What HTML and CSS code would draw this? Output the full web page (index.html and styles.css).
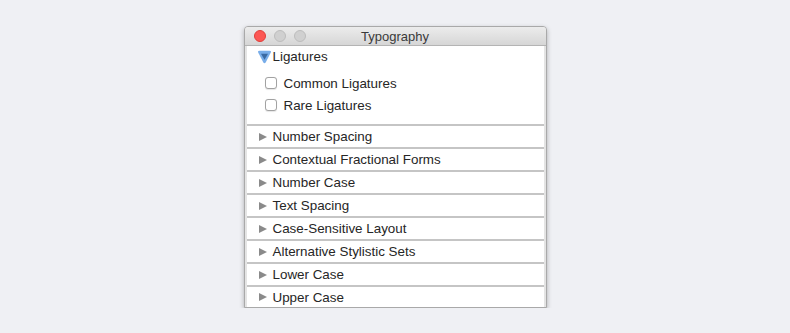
FILE: index.html
```html
<!DOCTYPE html>
<html lang="en">
<head>
  <meta charset="UTF-8" />
  <title>Typography</title>
  <link rel="stylesheet" href="styles.css">
</head>
<body>

  <div class="window">
    <div class="titlebar">
      <div class="lights">
        <span class="light close"></span>
        <span class="light"></span>
        <span class="light"></span>
      </div>
      <div class="title">Typography</div>
    </div>

    <div class="panel">
      <div class="group open">
        <div class="group-head">
          <svg class="disclosure" width="15" height="14" viewBox="0 0 15 14">
            <path d="M1.2 2.6 Q0.4 0.8 2.6 0.8 L12.4 0.8 Q14.6 0.8 13.8 2.6 L8.8 12.2 Q7.5 14.2 6.2 12.2 Z" fill="#78ade9"/>
            <path d="M4 3.8 L11 3.8 L7.5 9.8 Z" fill="#3a6aa3"/>
          </svg>
          <span>Ligatures</span>
        </div>
        <label class="check"><span class="box"></span>Common Ligatures</label>
        <label class="check"><span class="box"></span>Rare Ligatures</label>
      </div>

      <div class="row"><span class="tri"></span>Number Spacing</div>
      <div class="row"><span class="tri"></span>Contextual Fractional Forms</div>
      <div class="row"><span class="tri"></span>Number Case</div>
      <div class="row"><span class="tri"></span>Text Spacing</div>
      <div class="row"><span class="tri"></span>Case-Sensitive Layout</div>
      <div class="row"><span class="tri"></span>Alternative Stylistic Sets</div>
      <div class="row"><span class="tri"></span>Lower Case</div>
      <div class="row"><span class="tri"></span>Upper Case</div>
    </div>
  </div>

</body>
</html>
```

FILE: styles.css
```css
* {
  margin: 0;
  padding: 0;
  box-sizing: border-box;
}

body {
  background: #eff0f4;
  font-family: "Liberation Sans", Arial, sans-serif;
  font-size: 13.4px;
  color: #262626;
  display: flex;
  justify-content: center;
  padding-top: 26px;
}

.window {
  width: 303px;
  border: 1px solid #a9a9a9;
  border-radius: 4px 4px 0 0;
  background: #e4e4e4;
  box-shadow: 0 2px 5px rgba(0, 0, 0, 0.28);
  overflow: hidden;
}

.titlebar {
  position: relative;
  height: 19px;
  background: linear-gradient(#ececec, #d6d6d6);
  border-bottom: 1px solid #b4b4b4;
  display: flex;
  align-items: center;
  justify-content: center;
}

.lights {
  position: absolute;
  left: 9px;
  top: 3px;
  display: flex;
  gap: 8px;
}

.light {
  width: 12px;
  height: 12px;
  border-radius: 50%;
  background: #d0d0d0;
  border: 1px solid #bdbdbd;
}

.light.close {
  background: #fc5753;
  border-color: #df3e3a;
}

.title {
  color: #3a3a3a;
  font-size: 13px;
  padding-top: 1px;
}

.panel {
  margin: 0 2px;
  background: #fff;
}

.group {
  height: 78px;
  padding: 3px 0 0 10px;
}

.group-head {
  display: flex;
  align-items: center;
  gap: 1px;
  height: 15px;
}

.disclosure {
  display: block;
}

.check {
  display: flex;
  align-items: center;
  gap: 7px;
  margin-left: 8px;
  height: 22px;
}

.group-head + .check {
  margin-top: 8px;
}

.box {
  width: 12px;
  height: 12px;
  border: 1px solid #a2a2a2;
  border-radius: 3px;
  background: #fff;
  box-shadow: 0 0.5px 1px rgba(0, 0, 0, 0.1);
}

.row {
  height: 23px;
  border-top: 2px solid #c5c5c5;
  display: flex;
  align-items: center;
  padding-left: 12px;
  gap: 6px;
}

.row:last-child {
  height: 22px;
}

.tri {
  width: 0;
  height: 0;
  border-top: 4.5px solid transparent;
  border-bottom: 4.5px solid transparent;
  border-left: 8px solid #8a8a8a;
}
```
